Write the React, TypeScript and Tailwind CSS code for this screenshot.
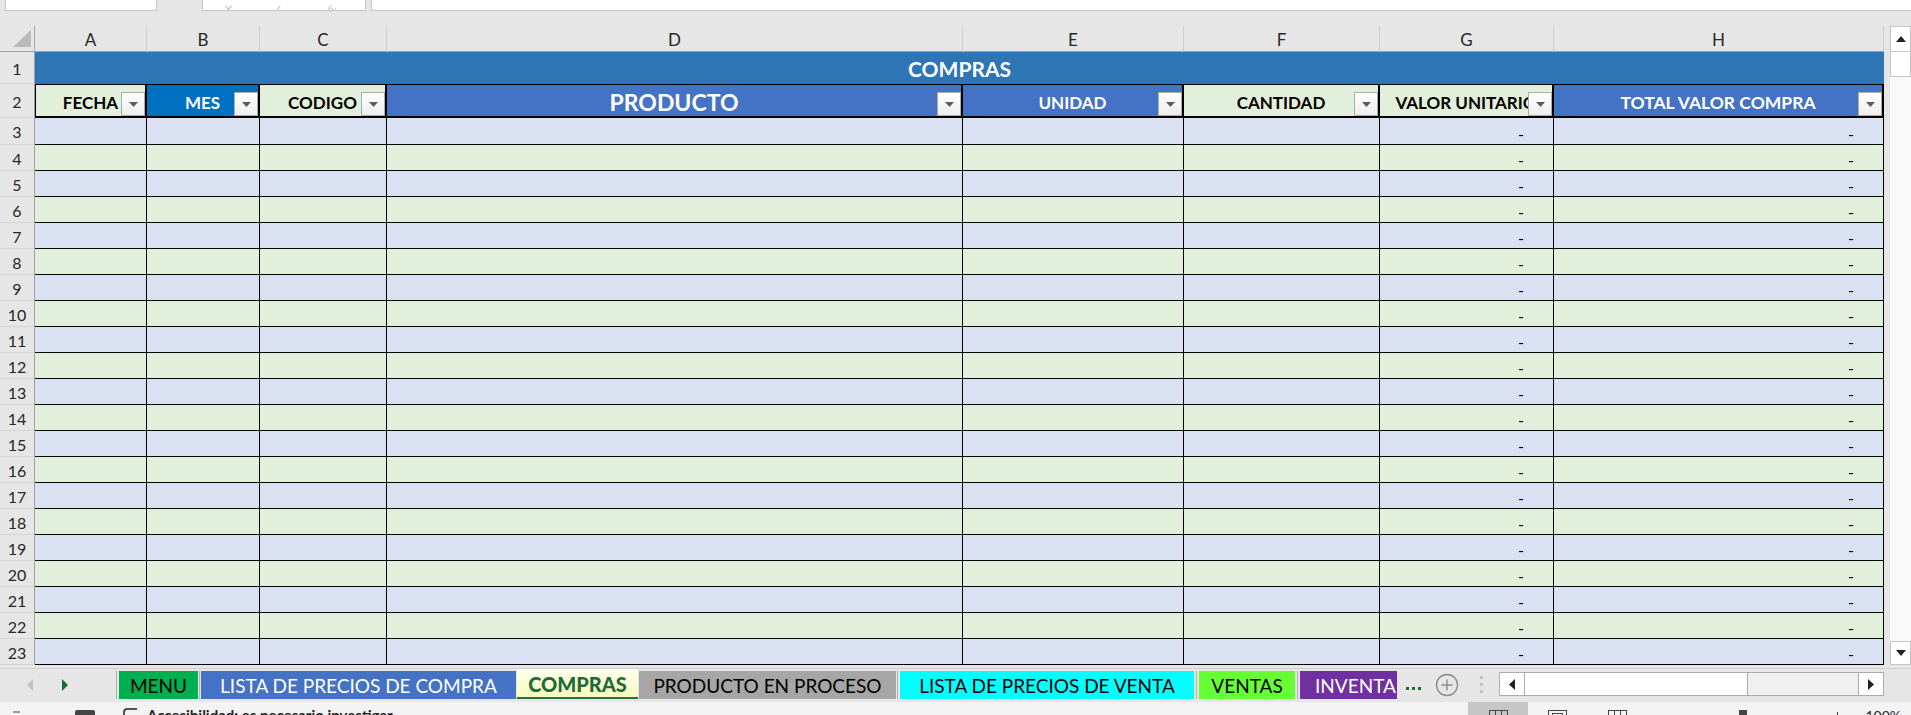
import React from 'react'

const GRID = 'grid grid-cols-[35px_112px_113px_127px_576px_221px_196px_174px_330px] content-start'

const LETTERS = ['A', 'B', 'C', 'D', 'E', 'F', 'G', 'H']

// header cells of row 2 (sizes written per cell so nothing conflicts)
const HEADS = [
  { label: 'FECHA', cls: 'border-l bg-[#e2efda] text-black text-[17px] pb-[5px]' },
  { label: 'MES', cls: 'bg-[#0070c0] text-white text-[17px] pb-[5px]' },
  { label: 'CODIGO', cls: 'bg-[#e2efda] text-black text-[17px] pb-[5px]' },
  { label: 'PRODUCTO', cls: 'bg-[#4472c4] text-white text-[23px] pb-[2px]' },
  { label: 'UNIDAD', cls: 'bg-[#4472c4] text-white text-[17px] pb-[5px]' },
  { label: 'CANTIDAD', cls: 'bg-[#e2efda] text-black text-[17px] pb-[5px]' },
  { label: 'VALOR UNITARIO', cls: 'bg-[#e2efda] text-black text-[17px] pb-[5px]' },
  { label: 'TOTAL VALOR COMPRA', cls: 'bg-[#4472c4] text-white text-[17.5px] pb-[5px]' },
]

const FilterBtn = () => (
  <div className="absolute right-0 bottom-0 w-[24px] h-[24px] border border-[#acacac] bg-linear-to-b from-white to-[#ededed] flex items-center justify-center">
    <svg width="9" height="5" viewBox="0 0 9 5">
      <path d="M0 0h9L4.5 5z" fill="#5b5b5b" />
    </svg>
  </div>
)

const RowHead = ({ n, h }: { n: number; h: string }) => (
  <div className={`${h} bg-[#e6e6e6] border-r border-r-[#9f9f9f] border-b border-b-[#d4d4d4] flex items-center justify-center pt-[2px] text-[16px] text-[#262626] leading-none`}>
    {n}
  </div>
)

const Sep = () => <div className="w-px h-[28px] bg-[#b1b1b1]" />

export default function App() {
  const rows = Array.from({ length: 21 }, (_, i) => i + 3)

  return (
    <div className="w-[1911px] h-[715px] overflow-hidden bg-[#e6e6e6] font-['Lato',sans-serif] select-none">
      {/* bottom of the formula bar */}
      <div className="h-[26px] flex items-start">
        <div className="ml-[5px] w-[152px] h-[11px] bg-white border-x border-b border-[#c6c6c6]" />
        <div className="ml-[45px] w-[164px] h-[11px] bg-white border-x border-b border-[#c6c6c6] flex items-end pl-[20px] text-[13px] leading-none text-[#c8c8c8] overflow-hidden">
          <span className="translate-y-[6px]">✕</span>
          <span className="ml-[38px] translate-y-[6px]">✓</span>
          <span className="ml-[44px] translate-y-[6px] italic font-['Liberation_Serif',serif]">fx</span>
        </div>
        <div className="ml-[5px] flex-1 h-[11px] bg-white border-l border-b border-[#c6c6c6]" />
      </div>

      <div className="flex h-[639px]">
        <div className={`${GRID} w-[1884px]`}>
          {/* column letters */}
          <div className="h-[26px] border-r border-r-[#ababab] border-b border-b-[#a0a0a0] bg-[#e6e6e6] flex items-end">
            <svg width="34" height="25" viewBox="0 0 34 25">
              <path d="M13 21H31V4Z" fill="#b9b9b9" />
            </svg>
          </div>
          {LETTERS.map((l) => (
            <div key={l} className="h-[26px] border-r border-r-[#cfcfcf] border-b border-b-[#a0a0a0] bg-[#e6e6e6] flex items-center justify-center pt-[1px] text-[17px] text-[#262626] leading-none">
              {l}
            </div>
          ))}

          {/* row 1 */}
          <RowHead n={1} h="h-[32px]" />
          <div className="col-span-8 h-[32px] bg-[#2e75b6] flex items-center justify-center text-white font-bold text-[21px] leading-none">
            COMPRAS
          </div>

          {/* row 2 */}
          <RowHead n={2} h="h-[34px]" />
          {HEADS.map((c) => (
            <div key={c.label} className={`relative h-[34px] border-t border-b-2 border-r-2 border-black overflow-hidden flex items-end justify-center font-bold leading-none whitespace-nowrap ${c.cls}`}>
              {c.label}
              <FilterBtn />
            </div>
          ))}

          {/* data rows */}
          {rows.map((r) => {
            const bg = r % 2 === 1 ? 'bg-[#d9e1f2]' : 'bg-[#e2efda]'
            const h = r === 3 ? 'h-[27px]' : 'h-[26px]'
            return (
              <React.Fragment key={r}>
                <RowHead n={r} h={h} />
                {LETTERS.map((l) => (
                  <div key={l} className={`${h} ${bg} border-r border-b border-black flex items-end justify-end pr-[29px] pb-[2px] text-[16px] leading-none text-black`}>
                    {l === 'G' || l === 'H' ? '-' : ''}
                  </div>
                ))}
              </React.Fragment>
            )
          })}
        </div>

        {/* vertical scrollbar */}
        <div className="w-[27px] pl-[6px] flex flex-col">
          <div className="h-[26px] bg-white border border-[#c6c6c6] flex items-center justify-center">
            <svg width="10" height="6" viewBox="0 0 10 6"><path d="M0 6h10L5 0z" fill="#222" /></svg>
          </div>
          <div className="h-[25px] bg-white border-x border-b border-[#c6c6c6]" />
          <div className="flex-1 bg-[#f8f8f8]" />
          <div className="h-[24px] bg-white border border-[#c6c6c6] flex items-center justify-center">
            <svg width="10" height="6" viewBox="0 0 10 6"><path d="M0 0h10L5 6z" fill="#222" /></svg>
          </div>
        </div>
      </div>

      {/* sheet tabs */}
      <div className="h-[37px] pt-[3px]">
        <div className="h-[34px] border-t border-[#d0d0d0] flex items-start pt-[2px] text-[19px] leading-none whitespace-nowrap">
          <div className="w-[116px] h-[28px] flex items-center">
            <svg className="ml-[27px]" width="6" height="12" viewBox="0 0 6 12"><path d="M6 0v12L0 6z" fill="#c3c3c3" /></svg>
            <svg className="ml-[29px]" width="6" height="12" viewBox="0 0 6 12"><path d="M0 0v12l6-6z" fill="#1e6b3a" /></svg>
          </div>
          <Sep />
          <div className="ml-[2px] w-[79px] h-[28px] bg-[#00b050] text-black flex items-center justify-center">MENU</div>
          <div className="ml-[1px]"><Sep /></div>
          <div className="ml-[1px] w-[315px] h-[28px] bg-[#4472c4] text-white flex items-center justify-center">LISTA DE PRECIOS DE COMPRA</div>
          <div className="ml-[1px] w-[121px] h-[30px] -mt-[2px] bg-linear-to-b from-[#fffff0] to-[#fbfbb8] border-b-2 border-[#217346] text-[#1e6b3a] font-black text-[20px] flex items-center justify-center pt-[2px]">COMPRAS</div>
          <div className="ml-[1px] w-[257px] h-[28px] bg-[#a6a6a6] text-black flex items-center justify-center">PRODUCTO EN PROCESO</div>
          <div className="ml-[1px]"><Sep /></div>
          <div className="ml-[2px] w-[294px] h-[28px] bg-[#00ffff] text-black flex items-center justify-center">LISTA DE PRECIOS DE VENTA</div>
          <div className="ml-[2px]"><Sep /></div>
          <div className="ml-[2px] w-[96px] h-[28px] bg-[#66ff33] text-black flex items-center justify-center">VENTAS</div>
          <div className="ml-[2px]"><Sep /></div>
          <div className="ml-[2px] w-[97px] h-[28px] bg-[#7030a0] text-white flex items-center pl-[15px] overflow-hidden">INVENTARIO</div>
          <div className="ml-[9px] mt-[16px] flex gap-[3px]">
            <div className="w-[3px] h-[3px] bg-[#1e6b3a]" />
            <div className="w-[3px] h-[3px] bg-[#1e6b3a]" />
            <div className="w-[3px] h-[3px] bg-[#1e6b3a]" />
          </div>
          <svg className="ml-[14px] mt-[2px]" width="24" height="24" viewBox="0 0 24 24">
            <circle cx="12" cy="12" r="10.5" fill="none" stroke="#8a8a8a" strokeWidth="1.3" />
            <path d="M12 6.5v11M6.5 12h11" stroke="#8a8a8a" strokeWidth="1.3" />
          </svg>
          <div className="ml-[21px] mt-[5px] flex flex-col gap-[4px]">
            <div className="w-[3px] h-[3px] bg-[#c2c2c2]" />
            <div className="w-[3px] h-[3px] bg-[#c2c2c2]" />
            <div className="w-[3px] h-[3px] bg-[#c2c2c2]" />
          </div>
          {/* horizontal scrollbar */}
          <div className="ml-[16px] mt-[1px] w-[385px] h-[24px] flex bg-[#f0f0f0] border border-[#ababab]">
            <div className="w-[25px] h-full bg-white border-r border-[#ababab] flex items-center justify-center">
              <svg width="6" height="11" viewBox="0 0 6 11"><path d="M6 0v11L0 5.5z" fill="#222" /></svg>
            </div>
            <div className="w-[223px] h-full bg-white border-r border-[#ababab]" />
            <div className="flex-1" />
            <div className="w-[25px] h-full bg-white border-l border-[#ababab] flex items-center justify-center">
              <svg width="6" height="11" viewBox="0 0 6 11"><path d="M0 0v11l6-5.5z" fill="#222" /></svg>
            </div>
          </div>
        </div>
      </div>

      {/* status bar (cut at the bottom edge) */}
      <div className="h-[13px] bg-[#f3f3f3] flex items-start overflow-hidden text-[15px] leading-none text-[#262626]">
        <div className="ml-[13px] mt-[9px] w-[7px] h-[2px] bg-[#9a9a9a]" />
        <div className="ml-[55px] mt-[8px] w-[20px] h-[5px] bg-[#444] rounded-t-[2px]" />
        <div className="ml-[28px] mt-[6px] w-[14px] h-[7px] border-l-2 border-t-2 border-[#555] rounded-tl-[4px]" />
        <div className="ml-[10px] pt-[6px] font-bold">Accesibilidad: es necesario investigar</div>
        <div className="ml-auto w-[60px] h-[13px] bg-[#c6c6c6] flex justify-center">
          <div className="mt-[8px] w-[19px] h-[6px] border-x border-t border-[#444] flex justify-evenly">
            <div className="w-px h-full bg-[#444]" />
            <div className="w-px h-full bg-[#444]" />
          </div>
        </div>
        <div className="ml-[20px] mt-[8px] w-[19px] h-[6px] border-x border-t border-[#444] flex justify-center pt-[2px]">
          <div className="w-[11px] h-full border-x border-t border-[#444]" />
        </div>
        <div className="ml-[41px] mt-[8px] w-[19px] h-[6px] border-x border-t border-[#444] flex justify-evenly">
          <div className="w-px h-full bg-[#444]" />
          <div className="w-px h-full bg-[#444]" />
        </div>
        <div className="ml-[112px] mt-[8px] w-[8px] h-[6px] bg-[#444]" />
        <div className="ml-[90px] mt-[10px] w-px h-[4px] bg-[#444]" />
        <div className="ml-[27px] pt-[7px] text-[14px]">100%</div>
        <div className="w-[10px]" />
      </div>
    </div>
  )
}
